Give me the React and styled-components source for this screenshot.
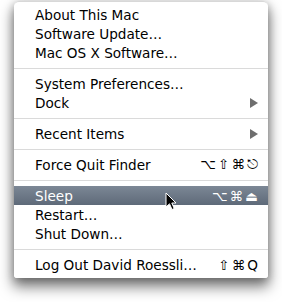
import React from 'react';
import styled, { createGlobalStyle } from 'styled-components';

const Global = createGlobalStyle`
  html, body {
    margin: 0;
    background: #ffffff;
  }
  body {
    font-family: "DejaVu Sans", "Liberation Sans", sans-serif;
  }
`;

const items = [
  { label: 'About This Mac' },
  { label: 'Software Update…' },
  { label: 'Mac OS X Software…' },
  { sep: true },
  { label: 'System Preferences…' },
  { label: 'Dock', submenu: true },
  { sep: true },
  { label: 'Recent Items', submenu: true },
  { sep: true },
  { label: 'Force Quit Finder', keys: '⌥⇧⌘⎋' },
  { sep: true },
  { label: 'Sleep', keys: '⌥⌘⏏', active: true },
  { label: 'Restart…' },
  { label: 'Shut Down…' },
  { sep: true },
  { label: 'Log Out David Roessli…', keys: '⇧⌘Q' },
];

const App = () => {
  return (
    <Page>
      <Global />
      <Menu>
        {items.map((item, i) =>
          item.sep ? (
            <Separator key={i} />
          ) : (
            <Row key={i} $active={item.active}>
              <Label>{item.label}</Label>
              {item.keys && <Keys>{item.keys}</Keys>}
              {item.submenu && <Arrow />}
              {item.active && (
                <Cursor viewBox="0 0 12 19" width="12" height="19">
                  <path
                    d="M1 1 L1 15 L4.5 11.8 L7 17.5 L9.2 16.5 L6.8 11 L11 11 Z"
                    fill="#000"
                    stroke="#fff"
                    strokeWidth="1"
                    strokeLinejoin="round"
                  />
                </Cursor>
              )}
            </Row>
          )
        )}
      </Menu>
    </Page>
  );
};

const Page = styled.div`
  width: 282px;
  height: 302px;
  padding: 1px 0 0 14px;
  box-sizing: border-box;
  overflow: hidden;
`;

const Menu = styled.div`
  width: 254px;
  box-sizing: border-box;
  padding: 3px 0 4px;
  background: rgba(255, 255, 255, 0.97);
  border-top: 1px solid #d8d8d8;
  border-radius: 5px 5px 3px 3px;
  box-shadow: 0 8px 14px 1px rgba(0, 0, 0, 0.5), 0 2px 9px rgba(0, 0, 0, 0.25);
`;

const Row = styled.div`
  position: relative;
  height: 19px;
  display: flex;
  align-items: center;
  justify-content: space-between;
  padding: 0 10px 0 21px;
  font-size: 13.6px;
  color: ${(p) => (p.$active ? '#ffffff' : '#000000')};
  background: ${(p) =>
    p.$active ? 'linear-gradient(#7c8795, #5e6a79)' : 'transparent'};
`;

const Label = styled.span`
  white-space: nowrap;
`;

const Keys = styled.span`
  letter-spacing: 2px;
  margin-right: -2px;
  white-space: nowrap;
`;

const Arrow = styled.span`
  width: 0;
  height: 0;
  border-top: 5px solid transparent;
  border-bottom: 5px solid transparent;
  border-left: 8px solid #6e6e6e;
`;

const Separator = styled.div`
  height: 12px;
  display: flex;
  align-items: center;

  &::before {
    content: '';
    flex: 1;
    height: 1px;
    background: #dadada;
  }
`;

const Cursor = styled.svg`
  position: absolute;
  left: 151px;
  top: 6px;
`;

export default App;
